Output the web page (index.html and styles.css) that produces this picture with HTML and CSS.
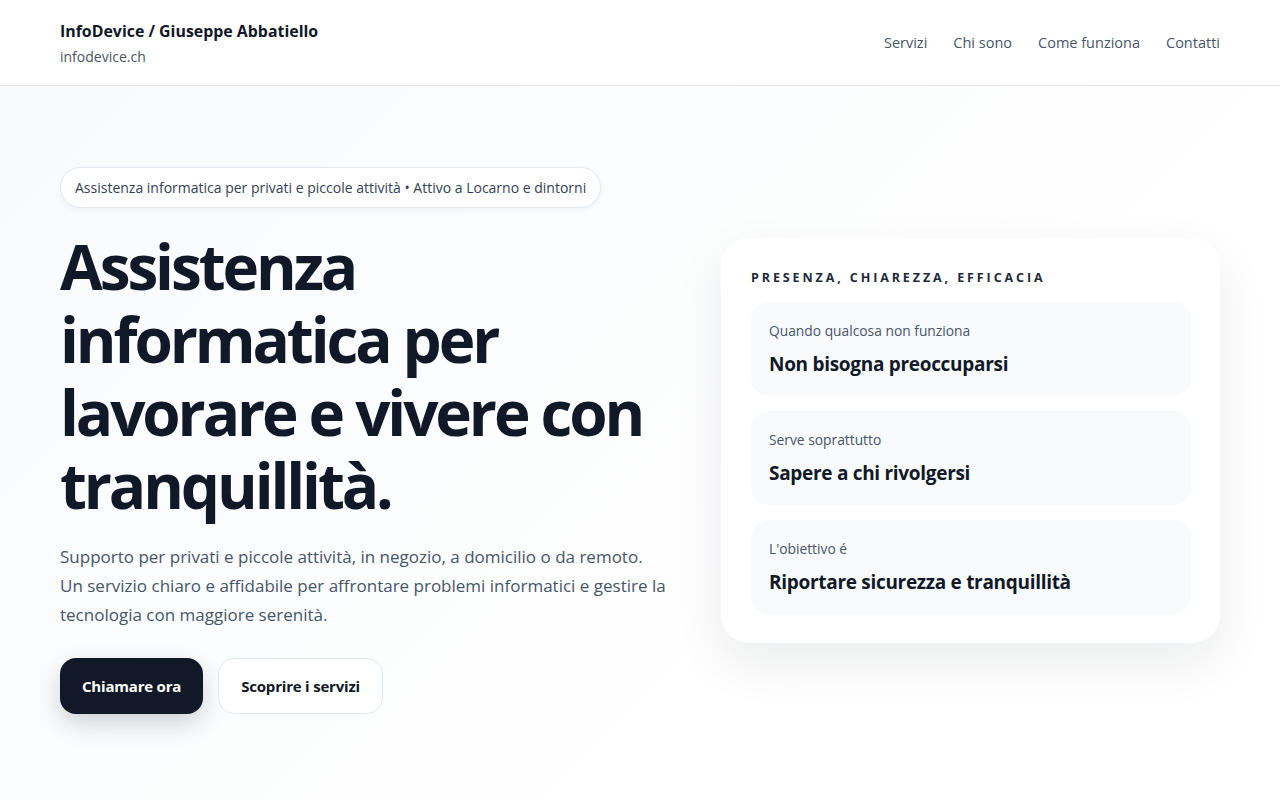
FILE: index.html
```html
<!DOCTYPE html>
<html lang="it">
<head>
<meta charset="utf-8">
<title>InfoDevice / Giuseppe Abbatiello</title>
<link rel="stylesheet" href="styles.css">
</head>
<body>
<header class="site-header">
  <div class="container header-inner">
    <div class="brand">
      <div class="brand-title">InfoDevice / Giuseppe Abbatiello</div>
      <div class="brand-sub">infodevice.ch</div>
    </div>
    <nav class="nav">
      <a href="#">Servizi</a>
      <a href="#">Chi sono</a>
      <a href="#">Come funziona</a>
      <a href="#">Contatti</a>
    </nav>
  </div>
</header>
<main class="hero">
  <div class="container hero-grid">
    <div class="hero-left">
      <div class="pill">Assistenza informatica per privati e piccole attività • Attivo a Locarno e dintorni</div>
      <h1 class="headline">Assistenza informatica per lavorare e vivere con tranquillità.</h1>
      <p class="lead">Supporto per privati e piccole attività, in negozio, a domicilio o da remoto. Un servizio chiaro e affidabile per affrontare problemi informatici e gestire la tecnologia con maggiore serenità.</p>
      <div class="actions">
        <a class="btn btn-dark" href="#">Chiamare ora</a>
        <a class="btn btn-light" href="#">Scoprire i servizi</a>
      </div>
    </div>
    <aside class="card">
      <div class="eyebrow">PRESENZA, CHIAREZZA, EFFICACIA</div>
      <div class="items">
        <div class="item">
          <div class="item-label">Quando qualcosa non funziona</div>
          <div class="item-title">Non bisogna preoccuparsi</div>
        </div>
        <div class="item">
          <div class="item-label">Serve soprattutto</div>
          <div class="item-title">Sapere a chi rivolgersi</div>
        </div>
        <div class="item">
          <div class="item-label">L'obiettivo é</div>
          <div class="item-title">Riportare sicurezza e tranquillità</div>
        </div>
      </div>
    </aside>
  </div>
</main>
</body>
</html>
```
FILE: styles.css
```css
* { box-sizing: border-box; }
html, body { margin: 0; padding: 0; }
body {
  font-family: "Open Sans", "Noto Sans", sans-serif;
  color: #0f172a;
  background: #ffffff;
  min-height: 800px;
}
a { text-decoration: none; color: inherit; }
.container {
  width: 1160px;
  margin: 0 auto;
}
.site-header {
  background: #ffffff;
  border-bottom: 1px solid #e5e7eb;
  height: 86px;
}
.header-inner {
  height: 85px;
  padding-top: 2px;
  display: flex;
  align-items: center;
  justify-content: space-between;
}
.brand-title {
  font-size: 15.9px;
  font-weight: 700;
  color: #111827;
  line-height: 22px;
  letter-spacing: 0;
}
.brand-sub {
  font-size: 14px;
  color: #4b5563;
  margin-top: 5px;
  line-height: 20px;
}
.nav {
  display: flex;
  gap: 26px;
  margin-top: -2px;
  font-size: 14.5px;
  color: #475569;
}
.hero {
  background: linear-gradient(135deg, #f8fafc 0%, #ffffff 70%);
  padding: 81px 0 80px;
  min-height: 714px;
}
.hero-grid {
  display: grid;
  grid-template-columns: 1fr 499px;
  gap: 51px;
  align-items: center;
}
.pill {
  display: inline-block;
  background: #ffffff;
  border: 1px solid #e2e8f0;
  border-radius: 999px;
  padding: 0 14px;
  height: 41px;
  line-height: 39px;
  font-size: 14px;
  color: #334155;
  box-shadow: 0 2px 6px rgba(15, 23, 42, 0.04);
}
.headline {
  margin: 22px 0 0;
  font-size: 62px;
  line-height: 73px;
  font-weight: 700;
  letter-spacing: -3.1px;
  color: #111827;
}
.lead {
  margin: 20px 0 0;
  font-size: 17px;
  line-height: 29px;
  color: #475569;
  max-width: 606px;
}
.actions {
  display: flex;
  gap: 15px;
  margin-top: 29px;
}
.btn {
  display: inline-flex;
  align-items: center;
  justify-content: center;
  height: 56px;
  padding: 0 22px;
  border-radius: 16px;
  font-size: 15px;
  font-weight: 700;
  letter-spacing: -0.2px;
}
.btn-dark {
  background: #111827;
  color: #ffffff;
  box-shadow: 0 10px 24px rgba(15, 23, 42, 0.18);
}
.btn-light {
  background: #ffffff;
  color: #111827;
  border: 1px solid #e2e8f0;
}
.card {
  background: #ffffff;
  border-radius: 28px;
  padding: 30px 29px 29px 30px;
  box-shadow: 0 20px 50px rgba(15, 23, 42, 0.08);
}
.eyebrow {
  font-size: 12.5px;
  font-weight: 700;
  letter-spacing: 2.9px;
  color: #1e293b;
  line-height: 20px;
}
.items {
  display: flex;
  flex-direction: column;
  gap: 15px;
  margin-top: 14px;
}
.item {
  background: #f8fafc;
  border-radius: 18px;
  padding: 19px 18px 20px;
  height: 94px;
}
.item-label {
  font-size: 13.8px;
  color: #475569;
  line-height: 20px;
}
.item-title {
  margin-top: 10px;
  font-size: 19px;
  font-weight: 700;
  color: #111827;
  line-height: 26px;
  letter-spacing: -0.3px;
}
```
